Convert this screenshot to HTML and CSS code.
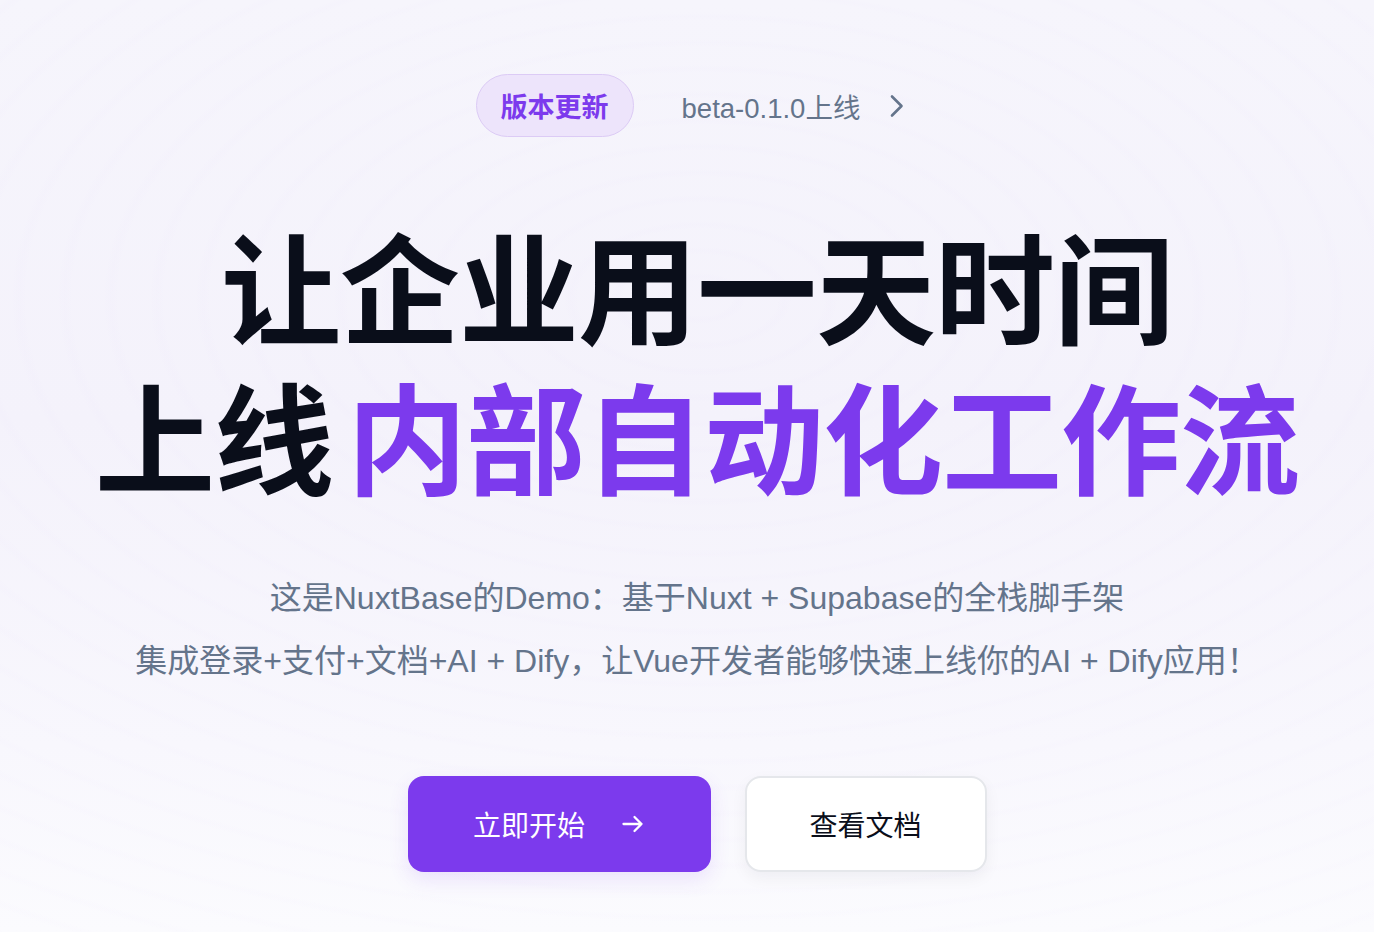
FILE: index.html
```html
<!DOCTYPE html>
<html lang="zh-CN">
<head>
<meta charset="utf-8">
<title>NuxtBase</title>
<link rel="stylesheet" href="styles.css">
</head>
<body>
<main class="hero">
  <div class="rings"></div>
  <div class="announce">
    <span class="badge">版本更新</span>
    <span class="release">beta-0.1.0上线</span>
    <svg class="chev" width="18" height="24" viewBox="0 0 18 24" fill="none"><polyline points="4,2.5 13.5,12 4,21.5" stroke="#64748b" stroke-width="2.6" stroke-linecap="round" stroke-linejoin="round"/></svg>
  </div>
  <h1 class="title">
    <span class="line">让企业用一天时间</span>
    <span class="line">上线<span class="accent">内部自动化工作流</span></span>
  </h1>
  <div class="desc">
    <p>这是NuxtBase的Demo：基于Nuxt + Supabase的全栈脚手架</p>
    <p>集成登录+支付+文档+AI + Dify，让Vue开发者能够快速上线你的AI + Dify应用！</p>
  </div>
  <div class="actions">
    <a class="btn primary" href="#">立即开始
      <svg class="arrow" width="24" height="24" viewBox="0 0 24 24" fill="none"><path d="M2.5 12h18M13.5 5l7 7-7 7" stroke="#fff" stroke-width="2.3" stroke-linecap="round" stroke-linejoin="round"/></svg>
    </a>
    <a class="btn secondary" href="#">查看文档</a>
  </div>
</main>
</body>
</html>
```
FILE: styles.css
```css
* { box-sizing: border-box; }
html, body { margin: 0; padding: 0; }
body {
  font-family: "Liberation Sans", "Noto Sans CJK SC", sans-serif;
  background: linear-gradient(180deg, #f6f5fc 0%, #f4f2fb 45%, #f8f7fd 80%, #fbfbfe 100%);
  min-height: 932px;
  overflow: hidden;
}
.hero {
  position: relative;
  display: flex;
  flex-direction: column;
  align-items: center;
  padding-top: 74px;
  padding-left: 20px;
  min-height: 932px;
}
.rings {
  position: absolute;
  left: 0; top: 0; right: 0; bottom: 0;
  pointer-events: none;
  background:
    repeating-radial-gradient(ellipse 60% 50% at 51% 32%, rgba(124,58,237,0) 0px, rgba(124,58,237,0) 30px, rgba(124,58,237,0.008) 38px, rgba(124,58,237,0) 46px);
}
.announce {
  position: relative;
  display: flex;
  align-items: center;
  height: 63px;
  margin-right: 12px;
}
.badge {
  display: flex;
  align-items: center;
  height: 63px;
  padding: 0 24px;
  border-radius: 32px;
  background: #ede4fb;
  border: 1.5px solid #dccbf5;
  color: #7c3aed;
  font-family: "Noto Sans CJK SC", sans-serif;
  font-weight: 700;
  font-size: 27px;
}
.release {
  margin-left: 48px;
  color: #64748b;
  font-size: 27.5px;
}
.chev { margin-left: 28px; }
.title {
  position: relative;
  margin: 72px 0 0;
  display: flex;
  flex-direction: column;
  align-items: center;
  font-family: "Noto Sans CJK SC", sans-serif;
  font-weight: 700;
  font-size: 120px;
  line-height: 150px;
  color: #0a0e1a;
  letter-spacing: -1px;
}
.line { display: block; white-space: nowrap; height: 150px; }
.accent { display: inline-block; color: #7c3aed; margin-left: 14px; }
.desc {
  position: relative;
  margin-top: 58px;
  text-align: center;
  color: #64748b;
  font-size: 32px;
  line-height: 63px;
}
.desc p { margin: 0; white-space: nowrap; }
.actions {
  position: relative;
  display: flex;
  gap: 34px;
  margin-top: 83px;
}
.btn {
  display: flex;
  align-items: center;
  justify-content: center;
  height: 96px;
  border-radius: 16px;
  font-family: "Noto Sans CJK SC", sans-serif;
  font-size: 28px;
  text-decoration: none;
}
.primary {
  width: 303px;
  background: #7c3aed;
  color: #fff;
  box-shadow: 0 8px 20px rgba(124,58,237,0.12);
}
.arrow { margin-left: 36px; }
.secondary {
  width: 242px;
  background: #fff;
  color: #0a0e1a;
  border: 2px solid #e5e7eb;
  box-shadow: 0 6px 16px rgba(15,23,42,0.05);
}
```
